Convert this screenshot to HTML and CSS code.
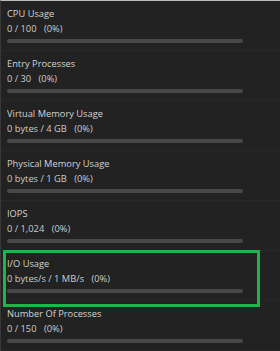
FILE: index.html
```html
<!DOCTYPE html>
<html lang="en">
<head>
  <meta charset="UTF-8" />
  <title>Resource Usage</title>
  <link rel="stylesheet" href="styles.css">
</head>
<body>

  <div class="usage-list">
    <div class="usage-item">
      <div class="usage-title">CPU Usage</div>
      <div class="usage-value">0 / 100 <span class="pct">(0%)</span></div>
      <div class="bar"><div class="bar-fill" style="width: 0%"></div></div>
    </div>
    <div class="usage-item">
      <div class="usage-title">Entry Processes</div>
      <div class="usage-value">0 / 30 <span class="pct">(0%)</span></div>
      <div class="bar"><div class="bar-fill" style="width: 0%"></div></div>
    </div>
    <div class="usage-item">
      <div class="usage-title">Virtual Memory Usage</div>
      <div class="usage-value">0 bytes / 4 GB <span class="pct">(0%)</span></div>
      <div class="bar"><div class="bar-fill" style="width: 0%"></div></div>
    </div>
    <div class="usage-item">
      <div class="usage-title">Physical Memory Usage</div>
      <div class="usage-value">0 bytes / 1 GB <span class="pct">(0%)</span></div>
      <div class="bar"><div class="bar-fill" style="width: 0%"></div></div>
    </div>
    <div class="usage-item">
      <div class="usage-title">IOPS</div>
      <div class="usage-value">0 / 1,024 <span class="pct">(0%)</span></div>
      <div class="bar"><div class="bar-fill" style="width: 0%"></div></div>
    </div>
    <div class="usage-item highlight">
      <div class="usage-title">I/O Usage</div>
      <div class="usage-value">0 bytes/s / 1 MB/s <span class="pct">(0%)</span></div>
      <div class="bar"><div class="bar-fill" style="width: 0%"></div></div>
    </div>
    <div class="usage-item">
      <div class="usage-title">Number Of Processes</div>
      <div class="usage-value">0 / 150 <span class="pct">(0%)</span></div>
      <div class="bar"><div class="bar-fill" style="width: 0%"></div></div>
    </div>
  </div>

</body>
</html>
```

FILE: styles.css
```css
* { box-sizing: border-box; }
body {
  font-family: "Open Sans", "Liberation Sans", sans-serif;
  font-size: 9.3px;
  background-color: #222222;
  color: #d2d2d2;
  margin: 0;
  height: 351px;
  overflow: hidden;
  border-top: 1px solid #bdbdbd;
  border-left: 1px solid #383838;
}
.usage-item {
  position: relative;
  padding: 6px 37px 7px 6px;
  border-bottom: 1px solid #282828;
}
.usage-title {
  line-height: 13px;
}
.usage-value {
  line-height: 13px;
  margin-top: 2px;
  color: #cccccc;
}
.usage-value .pct {
  margin-left: 5px;
}
.bar {
  margin-top: 4px;
  height: 4px;
  border-radius: 2px;
  background-color: #484848;
  overflow: hidden;
}
.bar-fill {
  height: 100%;
  background-color: #2a9fd6;
}

/* annotation box around the highlighted row */
.usage-item.highlight::after {
  content: "";
  position: absolute;
  top: -1px;
  left: 2px;
  width: 251px;
  height: 51px;
  border: 3px solid #1fb54a;
}
```
